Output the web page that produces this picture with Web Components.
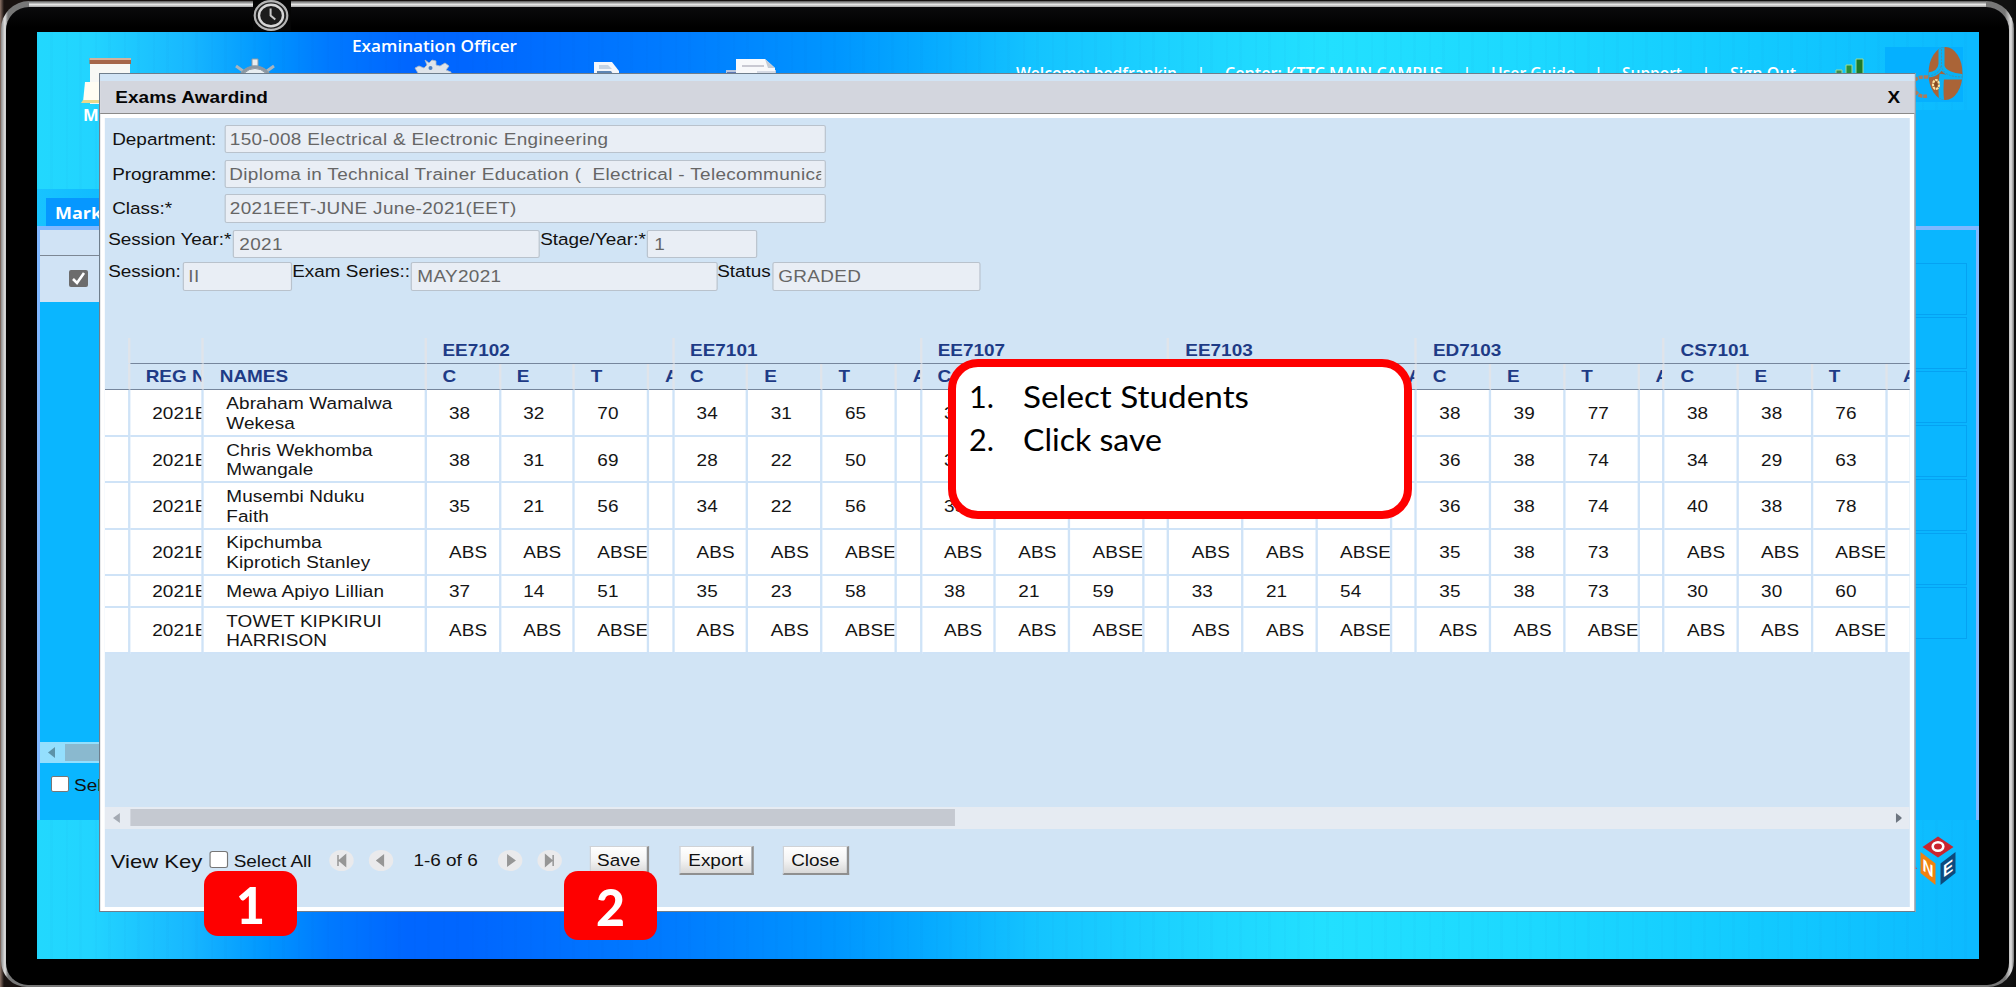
<!DOCTYPE html>
<html lang="en">
<head>
<meta charset="utf-8">
<title>Exams Awarding</title>
<style>
html,body{margin:0;padding:0;background:#fff;overflow:hidden}
body{width:2016px;height:998px;font-family:"Liberation Sans",Arial,sans-serif}
</style>
</head>
<body>
<tv-frame>
  <exam-desktop></exam-desktop>
</tv-frame>
<script>
// Horizontal stretch of the application window: its pixels are wider than tall.
const K = 1.163;
const x = n => (n / K).toFixed(3) + 'px';

const define = (name, html, setup) => customElements.define(name, class extends HTMLElement {
  connectedCallback() {
    if (this.shadowRoot) return;
    const root = this.attachShadow({ mode: 'open' });
    root.innerHTML = typeof html === 'function' ? html(this) : html;
    if (setup) setup(this, root);
  }
});

/* Single line of text fitted to a given width (attribute w) */
define('fit-text', `<style>
  :host{display:block;white-space:pre;flex:none}
  span{display:inline-block;transform-origin:0 50%}
</style><span><slot></slot></span>`, (el, root) => {
  const s = root.querySelector('span'), w = +el.getAttribute('w');
  el.style.width = w + 'px';
  s.style.transform = `scaleX(${w / s.getBoundingClientRect().width})`;
});

define('clock-knob', `<style>:host{display:block;width:38px;height:31px;background:#050505}svg{display:block}</style>
<svg width="38" height="31" viewBox="0 0 38 31">
  <ellipse cx="18" cy="15.5" rx="16.3" ry="14.3" fill="#222" stroke="#b5b5b5" stroke-width="2.2"/>
  <ellipse cx="18" cy="15.5" rx="12" ry="10.8" fill="#1c1c1c" stroke="#d6d6d6" stroke-width="2.4"/>
  <path d="M17.6 8.5V15.5L22.3 19.4" fill="none" stroke="#c8c8c8" stroke-width="2"/>
</svg>`);

define('tv-frame', `<style>
  :host{display:block;position:relative;width:2016px;height:987px;overflow:hidden;background:linear-gradient(90deg,#8d7468 0,#191210 4px,#111 2010px,#0b0b0b)}
  .rim{position:absolute;inset:1px 2px 0 1px;border-radius:28px 28px 26px 26px;background:linear-gradient(90deg,#8a8a8a,#e2e2e2 4px,#777 7px,#777 2004px,#e0e0e0 2010px,#777)}
  .top{position:absolute;left:29px;right:30px;top:1px;height:7px;background:linear-gradient(#555,#e6e6e6 50%,#888)}
  .glass{position:absolute;inset:7px 7px 2px 6px;border-radius:23px 23px 22px 22px;background:linear-gradient(#0a0a0c,#000 20px)}
  clock-knob{position:absolute;left:253px;top:0}
  .screen{position:absolute;left:37px;top:32px}
</style><div class="rim"></div><div class="top"></div><div class="glass"></div><clock-knob></clock-knob><div class="screen"><slot></slot></div>`);

define('toolbar-icons', `<style>:host{display:block}svg{display:block;overflow:visible}</style>
<svg width="800" height="80" viewBox="37 50 800 80">
  <path d="M90 61H130V104H90z" fill="#f7f8f5"/><path d="M89.500 58H131V64H89.500z" fill="#a5664a"/><path d="M89.500 58H131V60H89.500z" fill="#d3b29c"/>
  <path d="M85 82H104V102H83z" fill="#fffdf2"/><path d="M83 100H104V103H81z" fill="#e9d98c"/>
  <g stroke="#8e99a3" stroke-width="1"><path d="M252 59h6v7h-6z" fill="#e8edf0"/><path d="M236 66l7 5M274 66l-7 5" stroke="#a9b4bd" stroke-width="3"/><ellipse cx="255" cy="84" rx="18" ry="18" fill="#8b97a2"/><ellipse cx="255" cy="84" rx="15" ry="15.500" fill="#e8eef2"/></g>
  <path d="M425 60l4 3 3-3 4 1v4l4 1 5-3 4 3-3 4 5 2v9H412v-6l6-2-3-5 4-2 5 2 3-3z" fill="#dfe4ea" stroke="#aeb8c4" stroke-width=".8"/><circle cx="430.500" cy="68" r="2" fill="#4a7fc2"/>
  <path d="M594 62h18l7 9v6h-25z" fill="#f4f7fb"/><path d="M599 65h9l4 4h-13z" fill="#c5d3e2"/><path d="M597 71h14l2 3h-16z" fill="#5d86b4"/>
  <path d="M726 70h50v6h-50z" fill="#b9c6dd"/><path d="M727 72h28v4h-28z" fill="#5f78b4"/><path d="M736 59h29l10 9v7h-39z" fill="#f8f9fb"/><path d="M765 59l10 9h-7z" fill="#c3ccd6"/><path d="M742 66h22" stroke="#c9c9d2" stroke-width="2"/><path d="M757 71h18v5h-18z" fill="#d5dae4"/>
</svg>`);

define('corner-icons', `<style>:host{display:block}svg{display:block}</style>
<svg width="142" height="70" viewBox="1830 40 142 70">
  <rect x="1885" y="47" width="78" height="55" fill="#05b0ff"/>
  <g stroke="#9bdc9a" stroke-width="1"><path d="M1836 70h6v8h-6z" fill="#3d8d55"/><path d="M1846 65h6v13h-6z" fill="#2b8f3c"/><path d="M1856 59h7v19h-7z" fill="#1c7a2c"/></g>
  <clipPath id="e"><ellipse cx="1945.500" cy="73.500" rx="17" ry="26.500"/></clipPath>
  <g clip-path="url(#e)"><path d="M1925 44h48v60h-48z" fill="#aa6437"/>
  <path d="M1941 44V64Q1940 74 1928 75M1942 74Q1940 90 1942 104M1942 77H1966M1942 44V66Q1944 75 1966 77" fill="none" stroke="#0ab2f5" stroke-width="5"/>
  <path d="M1941.500 46V66Q1943 77 1963 77M1928 76Q1939 75 1941 66" fill="none" stroke="#4a91a6" stroke-width="1" stroke-dasharray="2 1.200"/></g>
  <path d="M1928 77Q1912 76 1914 86Q1916 98 1927 96" fill="none" stroke="#b07a58" stroke-width="3.500" stroke-dasharray="4 1"/>
  <ellipse cx="1936" cy="84.500" rx="3" ry="4.500" fill="#8a4c22" stroke="#fde3a0" stroke-width="2.200" stroke-dasharray="2.600 .700"/>
</svg>`);

define('one-cube', `<style>:host{display:block}svg{display:block}text{font:bold 17px "Liberation Sans",sans-serif;fill:#fff;text-anchor:middle}</style>
<svg width="50" height="60" viewBox="1910 830 50 60">
  <path d="M1910 857l7 12h-7z" fill="#d0394b"/>
  <path d="M1938 836.500l15.500 10.500-15.500 10.500-15.500-10.500z" fill="#c9252f"/>
  <ellipse cx="1938" cy="846.500" rx="5.300" ry="4.200" fill="none" stroke="#fff" stroke-width="2.600"/>
  <path d="M1920.500 852l15 11.500v21.500l-15-12z" fill="#f0820f"/>
  <path d="M1955.500 852l-15 11.500v21.500l15-12z" fill="#0d4a7c"/>
  <text transform="matrix(.9 .65 0 1 1928 874)">N</text>
  <text transform="matrix(.9 -.65 0 1 1948 874)">E</text>
</svg>`);

define('nav-links', `<style>
  :host{display:flex;color:#fff;font:600 16px/20px "Open Sans","Noto Sans",sans-serif}
  i{font-style:normal;text-align:center;flex:none}
</style>
<fit-text w="161">Welcome: bedfrankin</fit-text><i style="width:48px">|</i>
<fit-text w="218">Center: KTTC MAIN CAMPUS</fit-text><i style="width:48px">|</i>
<fit-text w="84">User Guide</fit-text><i style="width:47px">|</i>
<fit-text w="60">Support</fit-text><i style="width:48px">|</i>
<fit-text w="66">Sign Out</fit-text>`);

/* Page that lies behind the window: list panel with its left and right edges visible */
define('marks-panel', `<style>
  :host{display:flex;flex-direction:column;width:1942px;height:631px}
  .tabs{height:37px;display:flex;align-items:flex-end;background:linear-gradient(90deg,#18c3ff,#0ab6ff 110px)}
  .tab{margin-left:9px;width:120px;height:28px;background:#0697ff;color:#fff;font:bold 16px/30px "Open Sans","Noto Sans",sans-serif;padding-left:9px;box-sizing:border-box}
  .body{flex:1;border:solid #80b8ff;border-width:4px 3px 0 3px;background:#0ab6ff;display:flex;justify-content:space-between}
  .l{width:200px}
  .h{height:25px;background:#d0e3f5;border-bottom:1.500px solid #7c8794}
  .r{height:46px;background:#d0e3f5;display:flex;align-items:center;padding-left:29px}
  .chk{width:19px;height:17px;border-radius:2px;background:#6c6c6c;display:block;margin-top:-2px}
  .gap{height:440px}
  .sb{height:21px;background:#94dffd;display:flex;align-items:center}
  .sb svg{margin-left:8px}.sb b{margin-left:10px;width:150px;height:17px;background:#8ab9cf}
  .f{display:flex;align-items:center;margin-top:12px;font-size:16.300px;height:20px;padding-left:11px;gap:5px;color:#111}
  .f i{width:18px;height:16px;background:#fff;border:1px solid #777;border-radius:2px;box-sizing:border-box;margin-top:-2px}
  .g{padding:33px 9px 0 0;display:flex;flex-direction:column;gap:2px}
  .g u{display:block;width:150px;height:50px;border:1px solid #05a2f2}
</style>
<div class="tabs"><div class="tab"><fit-text w="56">Marks</fit-text></div></div>
<div class="body"><div class="l"><div class="h"></div><div class="r"><svg class="chk" viewBox="0 0 19 17"><path d="M4 9l4 4 7-10" fill="none" stroke="#fff" stroke-width="2.600"/></svg></div>
<div class="gap"></div><div class="sb"><svg width="7" height="11"><path d="M7 0v11L0 5.500z" fill="#5c93a8"/></svg><b></b></div>
<div class="f"><i></i><fit-text w="78">Select All</fit-text></div></div>
<div class="g"><u></u><u></u><u></u><u></u><u></u><u></u><u></u></div></div>`);

define('form-field', el => `<style>
  :host{display:flex;align-items:flex-start;flex:none}
  label{width:${x(+el.getAttribute('lw'))};height:${el.hasAttribute('low') ? '28.5px' : '19px'};line-height:${el.hasAttribute('low') ? '28.5px' : '19px'};white-space:nowrap;color:#111}
  div{width:${x(+el.getAttribute('iw'))};height:28.500px;box-sizing:border-box;border:1px solid #b9c2cc;border-right-width:1.500px;border-radius:2px;background:#e9eef5;color:#666;line-height:27px;padding-left:${x(+(el.getAttribute('pad') || 5))};padding-right:3px;white-space:pre;overflow:hidden}
  div span{display:block;overflow:hidden;letter-spacing:.29px}
</style><label>${el.getAttribute('label')}</label><div><span><slot></slot></span></div>`);

define('marks-table', () => {
  const groups = ['EE7102', 'EE7101', 'EE7107', 'EE7103', 'ED7103', 'CS7101'];
  const A = ['ABS', 'ABS', 'ABSE'], N = ['', '', ''];
  const rows = [
    ['Abraham Wamalwa<br>Wekesa', 46.9, [38, 32, 70], [34, 31, 65], [38, '', ''], N, [38, 39, 77], [38, 38, 76]],
    ['Chris Wekhomba<br>Mwangale', 46.3, [38, 31, 69], [28, 22, 50], [38, '', ''], N, [36, 38, 74], [34, 29, 63]],
    ['Musembi Nduku<br>Faith', 46.2, [35, 21, 56], [34, 22, 56], [35, '', ''], N, [36, 38, 74], [40, 38, 78]],
    ['Kipchumba<br>Kiprotich Stanley', 46.3, A, A, A, A, [35, 38, 73], A],
    ['Mewa Apiyo Lillian', 32, [37, 14, 51], [35, 23, 58], [38, 21, 59], [33, 21, 54], [35, 38, 73], [30, 30, 60]],
    ['TOWET KIPKIRUI<br>HARRISON', 46, A, A, A, A, A, A]
  ];
  const gcols = [74.2, 74.2, 74.3, 24.93];
  const cols = [24.7, 74.1, 222.7, ...groups.flatMap(() => gcols)];
  const cell = (w, t, c = '') => `<div class="c ${t === '' ? 'e' : ''} ${c}" style="width:${x(w)}">${t}</div>`;
  const r1 = cell(24.7, '', 'n') + cell(74.1, '') + cell(222.7, '') + groups.map(g => cell(247.63, g)).join('');
  // columns 12-13 and 15-17 sit under the instruction note and carry no heading
  const r2 = cols.map((w, i) => cell(w, i == 0 || [12, 13, 15, 16, 17].includes(i) ? '' : i == 1 ? 'REG NO' : i == 2 ? 'NAMES' : 'CETA'[(i - 3) % 4])).join('');
  const body = rows.map(r => `<div class="row" style="height:${r[1]}px">` +
    cell(24.7, '') + cell(74.1, '2021EET') + cell(222.7, `<span>${r[0]}</span>`) +
    r.slice(2).map(g => [...g, ''].map((v, i) => cell(gcols[i], v)).join('')).join('') + '</div>').join('');
  return `<style>
    :host{display:block;overflow:hidden}
    .row{display:flex;width:max-content;background:#fff}
    .c{box-sizing:border-box;flex:none;overflow:hidden;white-space:nowrap;display:flex;align-items:center;padding:2px 0 0 ${x(22.3)};border-right:2px solid #cfe3f7;border-bottom:2px solid #cfe3f7;line-height:19.300px;color:#151515;letter-spacing:.1px}
    .c.e{padding:0}
    .h{background:none}
    .h .c{padding-left:${x(15.8)};padding-top:1px;color:#1e3b86;font-weight:bold;border-right-color:#e0e4ea;border-bottom:1.500px solid #76869c;letter-spacing:0}
    .h .c.e{padding:0}
    .h .n{border-bottom-color:transparent}
    .a{height:25.700px}.b{height:26.400px}
  </style><div class="row h a">${r1}</div><div class="row h b">${r2}</div>${body}`;
});

define('h-scrollbar', `<style>
  :host{display:flex;align-items:center;height:22px;background:#e6ebf2}
  svg{margin:0 ${x(10)} 0 ${x(8)}}b{height:17px;width:${x(825)};background:#c5c9d1}
  .r{margin:0 ${x(8)} 0 auto}
</style><svg width="6" height="10"><path d="M6 0v10L0 5z" fill="#a4aab3"/></svg><b></b><svg class="r" width="5.500" height="10"><path d="M0 0v10l5.500-5z" fill="#6d7580"/></svg>`);

define('pager-button', el => {
  const p = { first: 'M7.500 5v11M14 5v11L8.500 10.500z', prev: 'M12.500 5.500v10L7 10.500z', next: 'M8.500 5.500v10l6-5z', last: 'M13.500 5v11M7 5v11l5.500-5.500z' }[el.getAttribute('kind')];
  return `<style>:host{display:block;width:21px;height:21px;border-radius:50%;background:#eaeaec;flex:none}svg{display:block}</style>
  <svg width="21" height="21"><path d="${p}" fill="#969696" stroke="#969696" stroke-width="1.300"/></svg>`;
});

define('push-button', el => `<style>
  :host{display:block;flex:none;box-sizing:border-box;width:${x(+el.getAttribute('w'))};height:29.500px;border:1px solid #cfd2d6;border-right:2px solid #8f8f8f;border-bottom:2px solid #8f8f8f;background:linear-gradient(#fff,#f4f4f4 50%,#d8d8d8);text-align:center;line-height:27px;color:#111}
</style><slot></slot>`);

define('exam-window', `<style>
  :host{display:flex;flex-direction:column;box-sizing:border-box;width:${x(1817)};height:839px;transform:scaleX(${K});transform-origin:0 0;border:1px solid #6f7e8c;background:#fff;font:16.300px "Liberation Sans",Arial,sans-serif}
  header{height:40px;flex:none;box-sizing:border-box;border-top:7px solid #d1e4f5;border-bottom:1px solid #8a8a8a;background:#d3d6de;display:flex;justify-content:space-between;line-height:32px;font-weight:bold;color:#050505;padding:0 ${x(14.5)} 0 ${x(15)}}
  header span{letter-spacing:.08px}
  main{flex:1;margin:4px ${x(5)};background:#d1e4f5;display:flex;flex-direction:column;overflow:hidden}
  .row{display:flex;height:28.500px;margin-left:${x(3)};flex:none}
  .row.w{margin-left:${x(7)}}
  marks-table{margin-top:47.500px;height:468.500px;flex:none}
  footer{flex:none;display:flex;align-items:center;height:30px;margin-top:17px;padding-left:${x(5.5)};color:#111}
  .vk{font-size:19px;width:${x(99)};white-space:nowrap;padding-top:3px}
  .cb{width:${x(18.5)};height:17px;box-sizing:border-box;border:1.300px solid #767676;border-radius:2.500px;background:#fff;margin-top:-3px}
  .sa{margin-left:${x(5.5)};width:${x(95.5)};padding-top:2px;white-space:nowrap}
</style>
<header><span>Exams Awardind</span><span>X</span></header>
<main>
  <div class="row w" style="margin-top:6.500px"><form-field low label="Department:" lw="112.500" iw="601" pad="4">150-008 Electrical &amp; Electronic Engineering</form-field></div>
  <div class="row w" style="margin-top:6.500px"><form-field low label="Programme:" lw="112.500" iw="601" pad="3.500">Diploma in Technical Trainer Education (  Electrical - Telecommunication</form-field></div>
  <div class="row w" style="margin-top:6.200px"><form-field low label="Class:*" lw="112.500" iw="601" pad="4">2021EET-JUNE June-2021(EET)</form-field></div>
  <div class="row" style="margin-top:7px"><form-field label="Session Year:*" lw="125" iw="307">2021</form-field><form-field label="Stage/Year:*" lw="107" iw="110" pad="6">1</form-field></div>
  <div class="row" style="margin-top:4px"><form-field label="Session:" lw="74" iw="110">II</form-field><form-field label="Exam Series::" lw="119" iw="306">MAY2021</form-field><form-field label="Status" lw="55" iw="209">GRADED</form-field></div>
  <marks-table></marks-table>
  <h-scrollbar></h-scrollbar>
  <footer><span class="vk">View Key</span><span class="cb"></span><span class="sa">Select All</span>
    <pager-button kind="first"></pager-button><pager-button kind="prev" style="margin-left:${x(15)}"></pager-button>
    <span style="width:${x(64)};margin:0 ${x(20.5)};white-space:nowrap">1-6 of 6</span>
    <pager-button kind="next"></pager-button><pager-button kind="last" style="margin-left:${x(15.5)}"></pager-button>
    <push-button w="60" style="margin-left:${x(27)}">Save</push-button><push-button w="74" style="margin-left:${x(30)}">Export</push-button><push-button w="66.500" style="margin-left:${x(29.5)}">Close</push-button>
  </footer>
</main>`);

define('step-badge', el => `<style>
  :host{display:flex;align-items:center;justify-content:center;width:93px;height:${el.getAttribute('h')}px;border-radius:14px;background:#fe0000;color:#fff;font:900 52px/60px Lato,"Open Sans",sans-serif}
</style><fit-text w="${el.getAttribute('tw')}"><slot></slot></fit-text>`);

define('note-callout', `<style>
  :host{display:block;box-sizing:border-box;width:464px;height:160px;border:8px solid #fe0000;border-radius:30px;background:#fff;color:#000;font:400 30.500px/43.300px Lato,"Open Sans",sans-serif;padding:8px 0 0 13px}
  div{display:flex}fit-text:first-child{margin-right:29px}
</style>
<div><fit-text w="25">1.</fit-text><fit-text w="226">Select Students</fit-text></div>
<div><fit-text w="25">2.</fit-text><fit-text w="139">Click save</fit-text></div>`);

define('exam-desktop', `<style>
  :host{display:block;position:relative;width:1942px;height:927px;overflow:hidden;
   background:repeating-linear-gradient(90deg,rgba(0,60,160,.02) 0 2px,transparent 2px 13px,rgba(0,60,160,.02) 13px 16px,transparent 16px 29px),
   linear-gradient(90deg,#22d8fe 0,#22d4ff 55px,#18b8ff 150px,#0096ff 230px,#007aff 290px,#0066ff 370px,#0066ff 430px,#007cff 640px,#0096ff 800px,#06aaff 890px,#14c4ff 1000px,#1cd2ff 1130px,#22e0ff 1290px,#1cd8ff 1500px,#12caff 1720px,#0cbaff 1930px)}
  .solid{position:absolute;right:0;top:78px;width:120px;height:90px;background:#0ab6ff}
  toolbar-icons{position:absolute;left:0;top:18px}
  .m{position:absolute;left:46px;top:72px;color:#fff;font:bold 15.500px/22px "Open Sans","Noto Sans",sans-serif}
  .role{position:absolute;left:315px;top:2px;color:#fff;font:600 16px/24px "Open Sans","Noto Sans",sans-serif}
  nav-links{position:absolute;left:979px;top:31px}
  corner-icons{position:absolute;left:1793px;top:8px}
  marks-panel{position:absolute;left:0;top:157px}
  one-cube{position:absolute;left:1873px;top:798px}
  exam-window{position:absolute;left:62px;top:41px}
  note-callout{position:absolute;left:911px;top:327px}
  .b1{position:absolute;left:167px;top:839px}
  .b2{position:absolute;left:527px;top:839px}
</style>
<toolbar-icons></toolbar-icons><fit-text class="m" w="52">Marks</fit-text>
<fit-text class="role" w="165">Examination Officer</fit-text>
<nav-links></nav-links><div class="solid"></div><corner-icons></corner-icons>
<marks-panel></marks-panel><one-cube></one-cube>
<exam-window></exam-window><note-callout></note-callout>
<step-badge class="b1" h="65" tw="29">1</step-badge><step-badge class="b2" h="69" tw="29">2</step-badge>`);
</script>
</body>
</html>
